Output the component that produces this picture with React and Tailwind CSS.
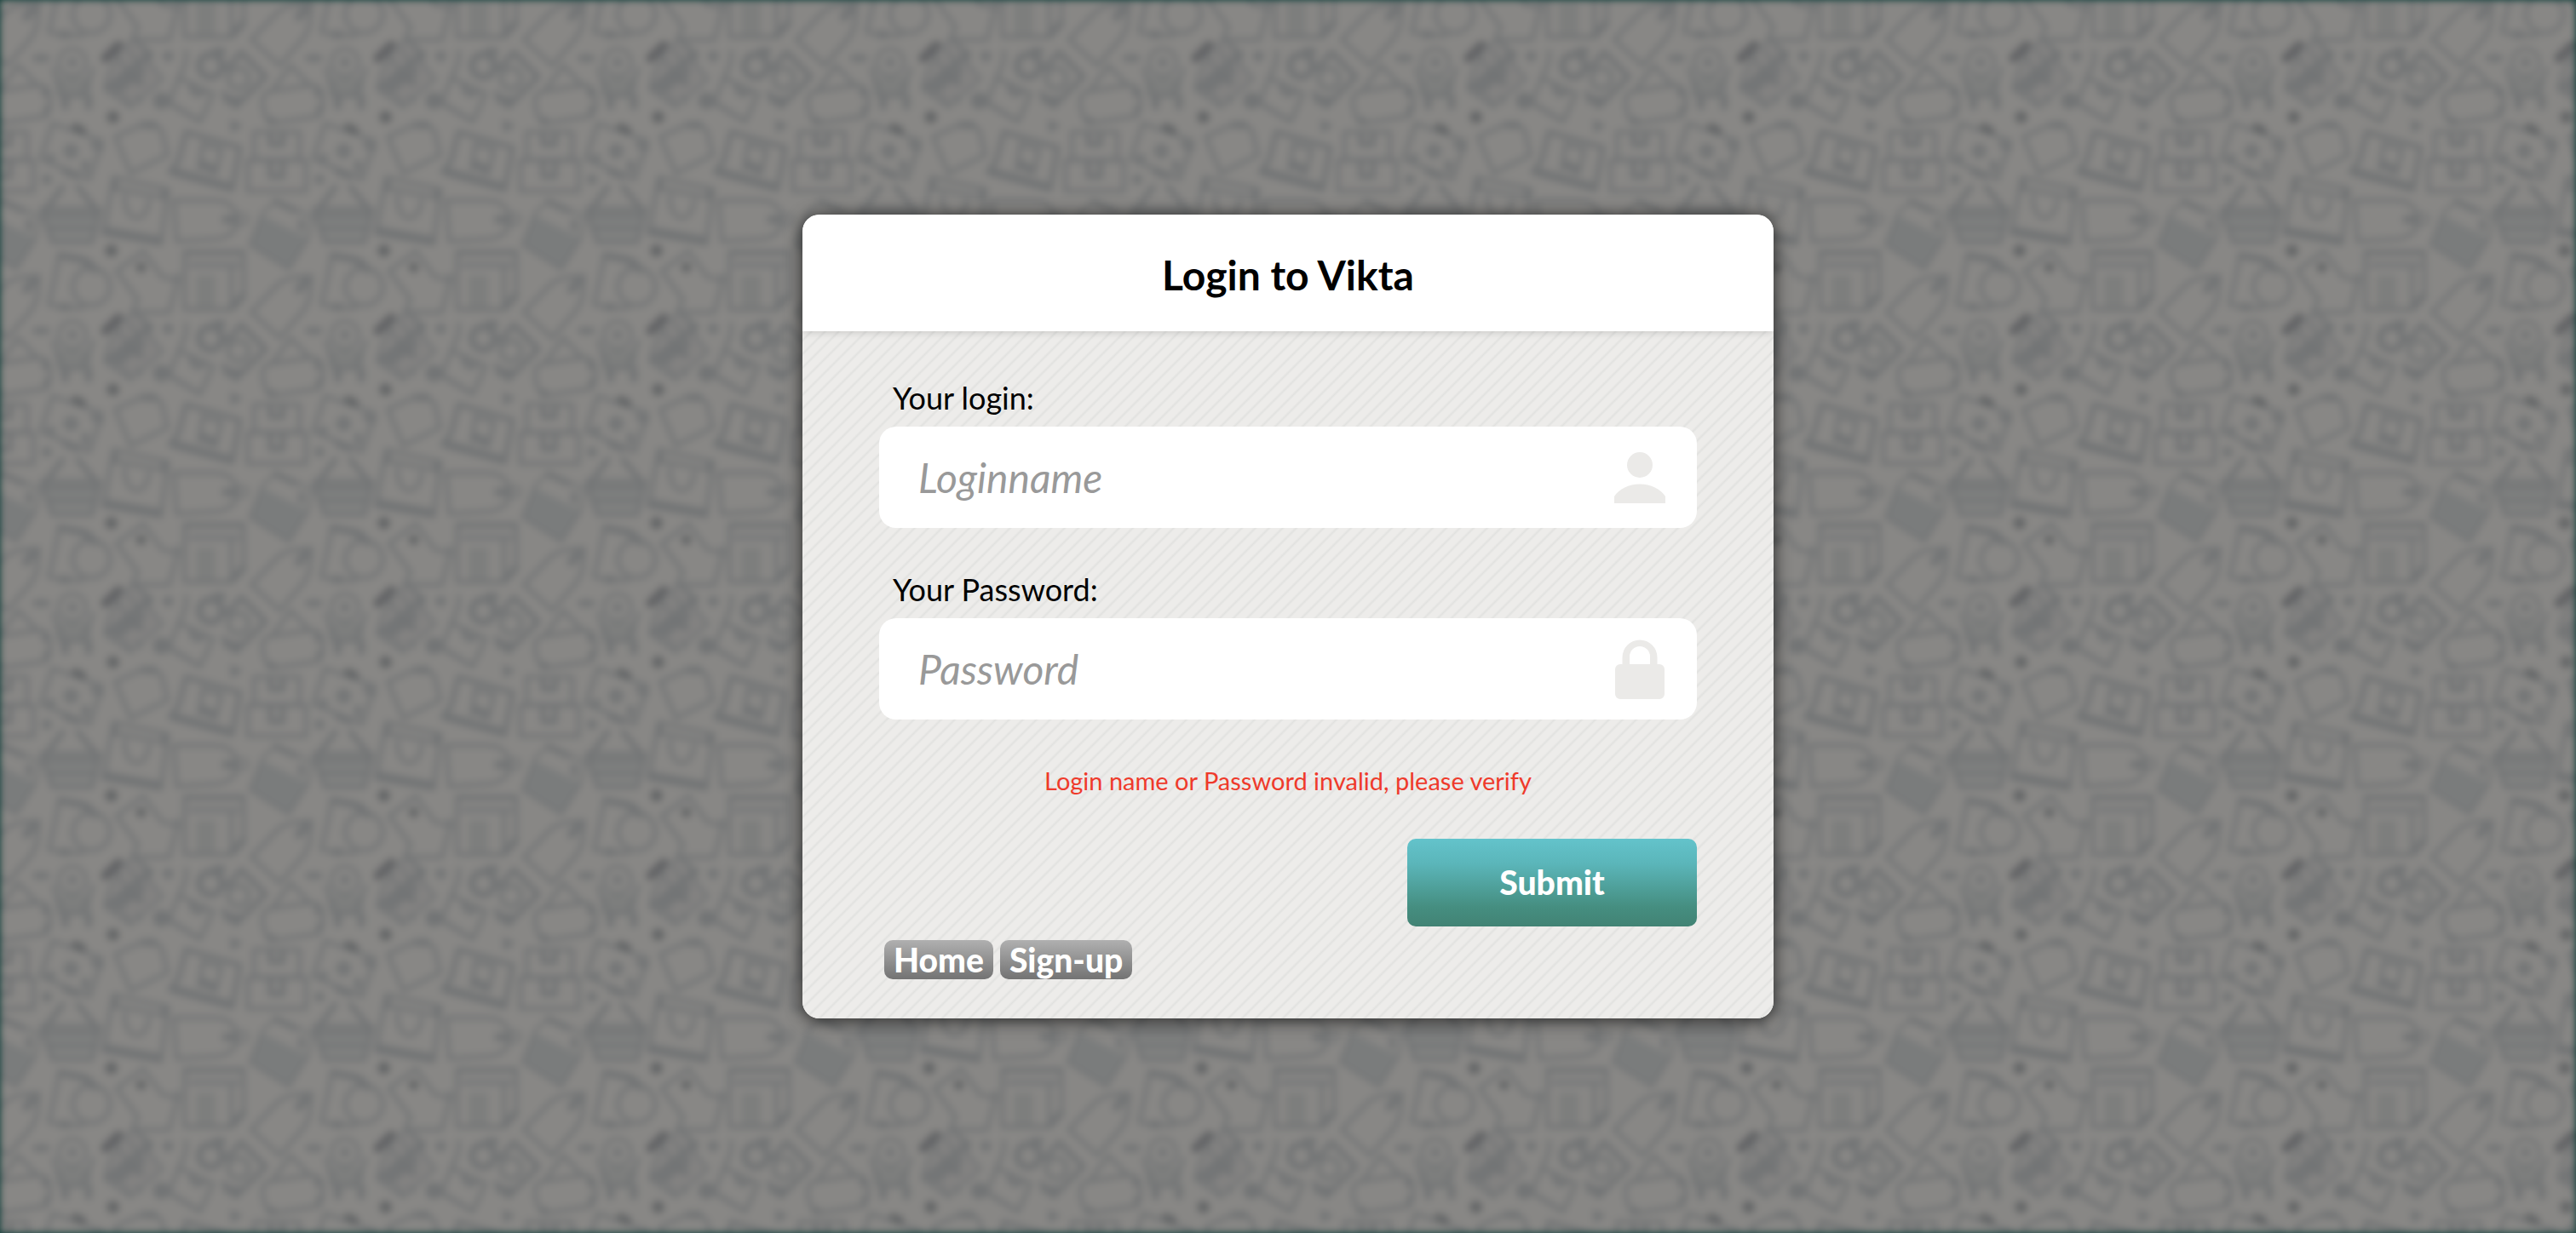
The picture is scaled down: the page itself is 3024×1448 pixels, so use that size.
const INK = '#5f6569';

/* One repeat of the shopping wallpaper, 960 x 960 units. */
function Motifs() {
  return (
    <g id="motifs" fill="none" stroke={INK} strokeWidth="14" strokeLinejoin="round" strokeLinecap="round" opacity="0.56">
      {/* stacked boxes */}
      <rect x="955" y="825" width="160" height="98" />
      <rect x="932" y="925" width="206" height="108" />
      <path d="M1013 828v40h42v-40M1013 930v52h42v-52" strokeWidth="20" />
      {/* small accents */}
      <g fill={INK} stroke="none">
        <circle cx="225" cy="32" r="18" />
        <circle cx="452" cy="283" r="22" fill="#474c50" />
        <circle cx="458" cy="773" r="22" fill="#474c50" />
        <circle cx="652" cy="558" r="19" />
        <circle cx="557" cy="342" r="18" fill="#474c50" />
        <ellipse cx="205" cy="565" rx="34" ry="13" />
        <path d="M870 780l46 22-42 28z" />
      </g>
      {/* skirt */}
      <path d="M1035 105l125 60-15 75-68 108-137-85 45-113z" strokeWidth="10" />
      <path d="M985 160l160 80-68 105-135-82z" fill={INK} stroke="none" opacity="0.6" />
      <path d="M1030 110l70 32M1122 182v22" strokeWidth="22" />
      {/* basket */}
      <path d="M280 60l-60 80M335 60l65 80" strokeWidth="20" />
      <path d="M205 135h208l-28 118H243z" fill={INK} fillOpacity="0.35" />
      <path d="M215 160h190M230 203h160" strokeWidth="14" />
      {/* shopping bag */}
      <path d="M460 25l192 42-26 192-202-36zM455 62l182 34" />
      <path d="M500 90c-5 100 80 100 84 16" />
      <path d="M430 212l194 34" strokeWidth="28" />
      <path d="M463 40v24M640 74v22" strokeWidth="24" />
      {/* price tag */}
      <path d="M672 106h150c42 0 74 32 74 68s-28 62-70 68l-144 8z" />
      <path d="M855 174h28" strokeWidth="30" />
      <circle cx="915" cy="172" r="18" strokeWidth="10" />
      {/* jug and plate */}
      <path d="M270 295l-18 90-20 88 60 12h60M270 295l70 12c35 6 48 22 58 42" />
      <path d="M272 300l80 16 42 34" strokeWidth="26" />
      <circle cx="382" cy="410" r="66" />
      <path d="M278 482h20" strokeWidth="28" />
      {/* folded label */}
      <path d="M565 285l-95 70 76 100-20 45h130l29-112-54-12z" />
      <path d="M685 372v20" strokeWidth="18" />
      {/* newspaper */}
      <path d="M710 288h208v150l-42 52H710zM875 350v110" />
      <path d="M712 290h204" strokeWidth="20" />
      <path d="M735 334h160" strokeWidth="24" opacity="0.7" />
      <path d="M750 370h70v112h-70z" fill={INK} stroke="none" opacity="0.5" />
      <path d="M875 485l40-42" strokeWidth="26" />
      {/* hanging tag */}
      <path d="M945 500l92-96c25-22 60-30 120-32l-6 70c-5 35-30 62-50 84l-56 64z" />
      <path d="M1112 420l22-26" strokeWidth="30" />
      {/* handbag */}
      <path d="M985 715c0-30 20-34 60-38l100-16c45-5 50 20 52 72l-14 36-170 26c-20-20-28-50-28-80z" />
      <path d="M1085 590l-60 80M1088 595l65 68" />
      <path d="M1180 680v10M1010 785h10M1185 745v5" strokeWidth="26" />
      {/* alarm clock */}
      <circle cx="315" cy="580" r="48" strokeWidth="12" />
      <circle cx="315" cy="580" r="10" fill={INK} />
      <path d="M248 602l32 96h70l38-96" />
      <path d="M260 640h115v58H265z" fill={INK} opacity="0.5" />
      <path d="M290 705v30M372 705v30" strokeWidth="26" />
      {/* brush and shirt */}
      <path d="M432 565l46-44" stroke="#45494e" strokeWidth="34" />
      <path d="M490 530l45-30 60 50-10 30 48 58-113 100-92-64 14-54z" fill={INK} fillOpacity="0.25" strokeWidth="10" />
      <path d="M440 670l150-120M470 680l90-70M505 620l50 30" strokeWidth="24" />
      <path d="M470 560l40 50M510 535l40 50M550 515l30 40M490 690l30 40M540 700l20 20" strokeWidth="10" />
      {/* small photo */}
      <path d="M690 635l120 55-45 98-110-68zM715 540c5 40-10 60-25 95" />
      <path d="M735 665c0 30 35 35 40 15" strokeWidth="20" />
      <circle cx="628" cy="715" r="30" fill={INK} stroke="none" />
      <path d="M655 722l100 60" strokeWidth="16" />
      {/* camera */}
      <path d="M910 545l85 85-105 105-42-45M910 545l-50 55" strokeWidth="20" />
      <circle cx="900" cy="636" r="36" />
      <circle cx="802" cy="592" r="40" strokeWidth="24" />
      <path d="M820 542h22M860 712h36" strokeWidth="28" />
      {/* picture */}
      <path d="M245 795l175 62-45 133-172-70z" />
      <circle cx="310" cy="892" r="16" strokeWidth="20" />
      <path d="M325 808l25 12" stroke="#474c50" strokeWidth="28" />
      <path d="M390 870l24 12M235 915h8M360 935v20M290 965l40 16" strokeWidth="24" />
      {/* plain tag */}
      <path d="M560 800l40-8 30 30 20 84-130 64-54-128z" />
      <path d="M565 800l35 2" strokeWidth="26" />
      {/* book */}
      <path d="M715 825l190 55-28 148-218-62 30-40z" strokeWidth="18" />
      <path d="M775 865l-14 90M780 870l60 16-20 80" />
      <path d="M670 965l204 55M775 940l40 20" strokeWidth="30" />
    </g>
  );
}

function Wallpaper() {
  return (
    <svg aria-hidden="true" className="absolute inset-0 h-full w-full blur-[4px]">
      <defs>
        <Motifs />
        <pattern id="wallpaper" x="300" y="200" width="320" height="320" patternUnits="userSpaceOnUse">
          <g transform="scale(0.33333)">
            <use href="#motifs" />
            <use href="#motifs" x="-960" />
            <use href="#motifs" y="-960" />
            <use href="#motifs" x="-960" y="-960" />
          </g>
        </pattern>
      </defs>
      <rect width="100%" height="100%" fill="#888785" />
      <rect width="100%" height="100%" fill="url(#wallpaper)" />
    </svg>
  );
}

function UserIcon() {
  return (
    <svg aria-hidden="true" viewBox="0 0 60 60" className="h-[60px] w-[60px]" fill="#ebeae8">
      <circle cx="30" cy="15" r="15" />
      <path d="M0 60v-8c6-9 17-14.500 30-14.500s24 5.500 30 14.500v8z" />
    </svg>
  );
}

function LockIcon() {
  return (
    <svg aria-hidden="true" viewBox="0 0 60 70" className="h-[70px] w-[60px]" fill="#ebeae8">
      <path d="M9.500 29V21a20.500 20.500 0 0 1 41 0v8H53a6 6 0 0 1 6 6v29a6 6 0 0 1-6 6H7a6 6 0 0 1-6-6V35a6 6 0 0 1 6-6zM18 29h24v-9a12 12 0 0 0-24 0z" />
    </svg>
  );
}

function Field({ id, label, type, placeholder, icon }) {
  return (
    <div>
      <label htmlFor={id} className="block pl-4 text-[36px] leading-[48px]">{label}</label>
      <div className="mt-[10px] flex h-[119px] items-center rounded-[20px] bg-white pr-[37px] pl-[46px]">
        <input
          id={id}
          type={type}
          placeholder={placeholder}
          className="h-full min-w-0 flex-1 bg-transparent text-[48px] outline-none placeholder:text-[#999999] placeholder:italic"
        />
        {icon}
      </div>
    </div>
  );
}

export default function App() {
  return (
    <div className="relative flex min-h-screen items-center justify-center overflow-hidden bg-[#0a3a35] py-10 font-[Lato,'Open_Sans',sans-serif] text-black">
      <Wallpaper />
      <main className="relative w-full max-w-[1140px] overflow-hidden rounded-[20px] bg-[#edecea] shadow-[0_2px_20px_rgba(0,0,0,0.75)]">
        <header className="relative bg-white pt-[42px] pb-[38px] text-center shadow-[0_0_10px_rgba(0,0,0,0.2)]">
          <h1 className="text-[48px] leading-[57px] font-bold">Login to Vikta</h1>
        </header>
        <form
          onSubmit={(e) => e.preventDefault()}
          className="bg-[linear-gradient(135deg,#edecea_24%,#e2e2e0_34%,#edecea_44%,#edecea_74%,#e2e2e0_84%,#edecea_94%)] bg-[length:16px_16px] px-[90px] pt-[54px] pb-[46px]"
        >
          <div className="flex flex-col gap-12">
            <Field id="login" label="Your login:" type="text" placeholder="Loginname" icon={<UserIcon />} />
            <Field id="password" label="Your Password:" type="password" placeholder="Password" icon={<LockIcon />} />
          </div>
          <p role="alert" className="mt-[52px] text-center text-[29px] leading-10 text-[#ef3a2b]">
            Login name or Password invalid, please verify
          </p>
          <div className="mt-12 flex justify-end">
            <button
              type="submit"
              className="h-[103px] w-[340px] rounded-[10px] bg-[linear-gradient(#63c3cb,#5bb6ba_28%,#458e80_78%,#428374)] text-[39px] font-black text-white"
            >
              Submit
            </button>
          </div>
          <nav className="mt-4 flex gap-2 pl-[6px] text-[39px] leading-[46px] font-black text-white">
            <a href="#home" className="rounded-[10px] bg-[linear-gradient(#b0b0b0,#737373)] px-[11px]">Home</a>
            <a href="#sign-up" className="rounded-[10px] bg-[linear-gradient(#b0b0b0,#737373)] px-[11px]">Sign-up</a>
          </nav>
        </form>
      </main>
    </div>
  );
}
